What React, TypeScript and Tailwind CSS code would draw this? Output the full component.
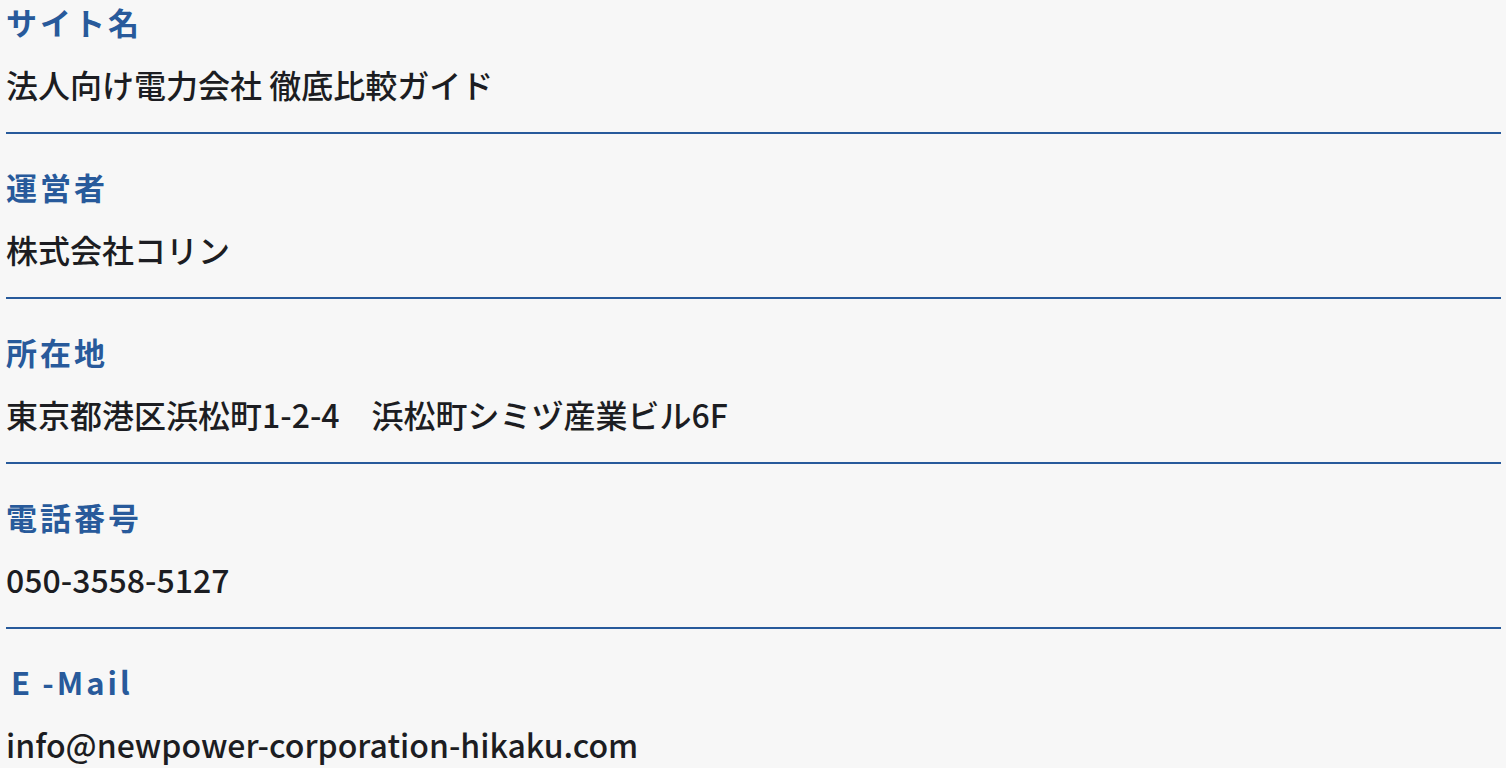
const items = [
  { label: "サイト名", value: "法人向け電力会社 徹底比較ガイド" },
  { label: "運営者", value: "株式会社コリン" },
  { label: "所在地", value: "東京都港区浜松町1-2-4　浜松町シミヅ産業ビル6F" },
  { label: "電話番号", value: "050-3558-5127" },
  { label: "E\u2009-Mail", value: "info@newpower-corporation-hikaku.com", pad: true },
];

export default function App() {
  return (
    <div className="min-h-screen bg-[#f7f7f7] pl-[6px] pr-[5px] font-['Noto_Sans_CJK_JP','Noto_Sans',sans-serif]">
      <dl className="flex flex-col gap-[31px]">
        {items.map((it) => (
          <div key={it.label} className="border-b-2 border-[#285a9b] pb-[24px]">
            <dt
              className={`h-[44px] leading-[44px] text-[31px] font-bold tracking-[3px] text-[#285a9b] ${it.pad ? "pl-[5px]" : ""}`}
            >
              {it.label}
            </dt>
            <dd className="mt-[16px] h-[48px] leading-[48px] text-[32px] font-medium text-[#1c1d22]">
              {it.value}
            </dd>
          </div>
        ))}
      </dl>
    </div>
  );
}
